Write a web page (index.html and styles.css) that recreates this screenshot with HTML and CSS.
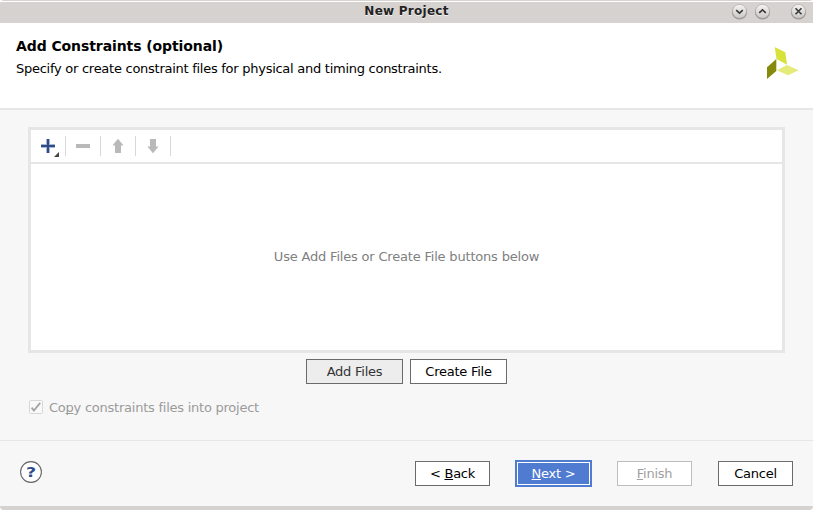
FILE: index.html
```html
<!DOCTYPE html>
<html lang="en">
<head>
<meta charset="utf-8">
<title>New Project</title>
<link rel="stylesheet" href="styles.css">
</head>
<body>
<div class="window">
  <div class="titlebar">
    <span class="title">New Project</span>
    <div class="controls">
      <svg class="control" viewBox="0 0 17 17"><use href="#knob"/><path class="mark" d="M5.2 7.2 8.5 10.2 11.8 7.2"/></svg>
      <svg class="control" viewBox="0 0 17 17"><use href="#knob"/><path class="mark" d="M5.2 9.8 8.5 6.8 11.8 9.8"/></svg>
      <svg class="control close" viewBox="0 0 17 17"><use href="#knob"/><path class="mark" d="M5.5 5.3 11.5 11.3M11.5 5.3 5.5 11.3"/></svg>
    </div>
  </div>
  <header class="header">
    <div>
      <h1 class="heading">Add Constraints (optional)</h1>
      <p class="subtitle">Specify or create constraint files for physical and timing constraints.</p>
    </div>
    <svg class="logo" viewBox="0 0 32 32">
      <path fill="#d8e23c" d="M7.700 0 18.300 5.300 20 17.700 9.500 12z"/>
      <path fill="#858a0b" d="M0 20.300 9.300 12V24L0 32z"/>
      <path fill="#e5eb79" d="M9.800 23.300 20 18 31.700 23.300 21 28.300z"/>
    </svg>
  </header>
  <main class="body">
    <section class="panel">
      <div class="toolbar">
        <span class="tool"><svg width="34" height="26" viewBox="0 0 34 26"><path fill="#a7b5d1" d="M10 11h14v4H10z M15 6h4v14h-4z"/><path fill="#2e4c8a" d="M10 12h14v2H10z M16 6h2v14h-2z"/><path fill="#444" d="M28 19v5h-5z"/></svg></span>
        <span class="tool"><svg width="34" height="26" viewBox="0 0 34 26"><path fill="#b9b9b9" d="M10 11h14v4H10z"/></svg></span>
        <span class="tool"><svg width="34" height="26" viewBox="0 0 34 26"><path fill="#b9b9b9" d="M17 5.8 22.6 12.5H20V20h-6v-7.500H11.400z"/></svg></span>
        <span class="tool"><svg width="34" height="26" viewBox="0 0 34 26"><path fill="#b9b9b9" d="M14 6h6v7.500h2.600L17 20.200 11.400 13.500H14z"/></svg></span>
      </div>
      <div class="list">Use Add Files or Create File buttons below</div>
    </section>
    <div class="actions">
      <button class="btn file pressed">Add Files</button>
      <button class="btn file">Create File</button>
    </div>
    <div class="option">
      <svg class="check" viewBox="0 0 14 14"><rect x=".5" y=".5" width="13" height="13" rx="1" fill="#f9f9f9" stroke="#d7d7d7"/><path d="M2.600 7.700 4.900 10.500 11.200 2.900" fill="none" stroke="#a5a5a5" stroke-width="1.900"/></svg>
      <span class="option-label">Co<u>p</u>y constraints files into project</span>
    </div>
  </main>
  <footer class="footer">
    <svg class="help" viewBox="0 0 22 22"><circle cx="11" cy="11" r="10.400" fill="#fff" stroke="#666" stroke-width="1.100"/><text transform="translate(11 16) scale(1.250 1)" text-anchor="middle">?</text></svg>
    <button class="btn">&lt; <u>B</u>ack</button>
    <button class="btn primary"><u>N</u>ext &gt;</button>
    <button class="btn disabled"><u>F</u>inish</button>
    <button class="btn cancel">Cancel</button>
  </footer>
  <div class="edge"></div>
</div>
<svg class="defs" width="0" height="0">
  <defs>
    <linearGradient id="metal" x1="0" y1="0" x2="0" y2="1"><stop offset="0" stop-color="#f5f4f3"/><stop offset="1" stop-color="#cbc8c5"/></linearGradient>
    <g id="knob"><circle cx="8.500" cy="9" r="7.600" fill="#969390"/><circle cx="8.500" cy="8.300" r="7" fill="url(#metal)" stroke="#aaa7a4" stroke-width=".6"/></g>
  </defs>
</svg>
</body>
</html>
```
FILE: styles.css
```css
* { box-sizing: border-box; }
body {
  margin: 0;
  background: #fff;
  font: 13px/16px "DejaVu Sans", sans-serif;
  color: #000;
}
.window {
  width: 813px;
  height: 510px;
  display: flex;
  flex-direction: column;
  overflow: hidden;
  border-radius: 4px;
  background: #f7f7f7;
}
.titlebar {
  height: 23px;
  flex: none;
  display: grid;
  grid-template-columns: 1fr auto 1fr;
  background: linear-gradient(#d6d2cf 1px, #fff 1px, #fff 2px, #d6d2cf 2px);
}
.title {
  grid-column: 2;
  font-weight: bold;
  font-size: 12px;
  line-height: 22px;
  letter-spacing: 0.25px;
  color: #222;
  text-shadow: 0 1px #f2f0ef;
}
.controls {
  display: flex;
  justify-content: flex-end;
  gap: 6px;
  padding: 3px 6px 0 0;
}
.control { width: 17px; height: 17px; }
.close { margin-left: 13px; }
.mark { fill: none; stroke: #3b3937; stroke-width: 1.6; }
.header {
  height: 87px;
  flex: none;
  display: flex;
  justify-content: space-between;
  padding: 15px 14px 0 16px;
  background: #fff;
  border-bottom: 2px solid #e6e6e6;
}
.heading { margin: 0; font-size: 14px; line-height: 16px; letter-spacing: -0.09px; }
.subtitle { margin: 7px 0 0; letter-spacing: -0.265px; }
.logo { width: 32px; height: 32px; margin-top: 9px; }
.body { height: 330px; flex: none; padding: 17px 28px 0; }
.panel {
  height: 226px;
  border: 3px solid #e6e6e6;
  background: #fff;
  display: flex;
  flex-direction: column;
}
.toolbar {
  height: 34px;
  flex: none;
  display: flex;
  padding-top: 3px;
  border-bottom: 2px solid #e6e6e6;
}
.tool {
  width: 35px;
  height: 26px;
  display: flex;
}
.tool::after { content: ""; width: 1px; height: 20px; margin-top: 3px; background: #d8d8d8; }
.list {
  flex: 1;
  display: flex;
  align-items: center;
  justify-content: center;
  color: #808080;
  letter-spacing: -0.19px;
}
.actions { display: flex; justify-content: center; gap: 7px; margin-top: 6px; }
.btn {
  width: 75px;
  height: 25px;
  padding: 0;
  border: 1px solid #6b6b6b;
  background: #fff;
  color: #000;
  font: inherit;
  letter-spacing: -0.25px;
  white-space: nowrap;
}
.btn.file { width: 97px; }
.btn.pressed { background: #ededed; color: #333; }
.btn.primary {
  width: 77px;
  height: 27px;
  margin: 0 25px;
  border: 2px solid #4f7bd0;
  background: #4f7bd0;
  color: #fff;
  box-shadow: inset 0 0 0 1px #fff;
}
.btn.disabled { border-color: #bdbdbd; color: #a0a0a0; }
.btn.cancel { margin-left: 26px; }
u { text-underline-offset: 1px; text-decoration-thickness: 1px; text-decoration-skip-ink: none; }
.option {
  display: flex;
  align-items: center;
  margin: 15px 0 0 1px;
  color: #9b9b9b;
}
.check { width: 14px; height: 14px; }
.option-label { margin: 1px 0 -1px 6px; letter-spacing: -0.24px; }
.footer {
  height: 66px;
  flex: none;
  display: flex;
  align-items: center;
  padding: 0 20px;
  border-top: 1px solid #e6e6e6;
}
.help {
  width: 22px;
  height: 22px;
  margin: 0 auto 3px 0;
}
.help text { font: bold 14px "DejaVu Sans", sans-serif; fill: #2e4c8a; }
.edge { flex: 1; background: #d6d2cf; }
.defs { display: block; }
```
